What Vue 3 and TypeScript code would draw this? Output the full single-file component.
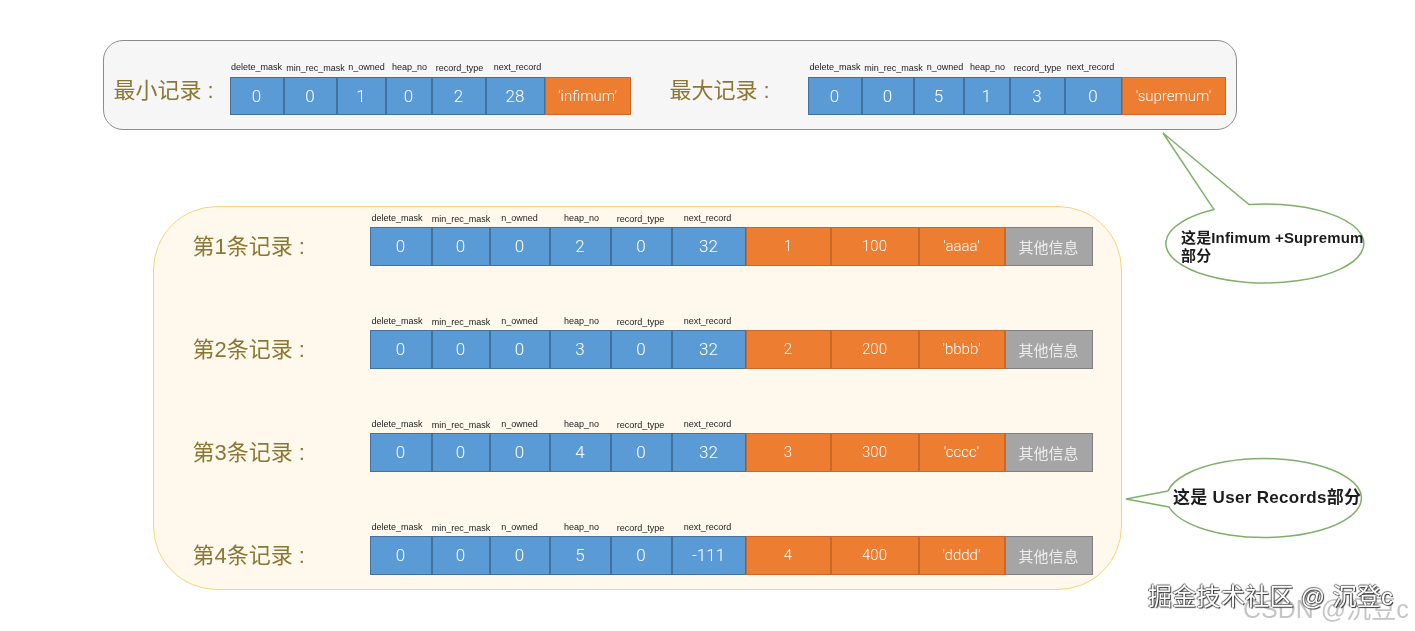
<script setup lang="ts">
interface Cell {
  text: string
  w: number
  kind: 'blue' | 'orange' | 'gray'
}

const fieldNames = ['delete_mask', 'min_rec_mask', 'n_owned', 'heap_no', 'record_type', 'next_record']

const makeCells = (values: string[], widths: number[]): Cell[] =>
  values.map((text, i) => ({
    text,
    w: widths[i],
    kind: i < 6 ? 'blue' : i === values.length - 1 && values.length > 7 ? 'gray' : 'orange'
  }))

// 上面两条：最小记录 / 最大记录
const infimum = makeCells(['0', '0', '1', '0', '2', '28', "'infimum'"], [54, 53, 49, 46, 54, 59, 86])
const supremum = makeCells(['0', '0', '5', '1', '3', '0', "'supremum'"], [54, 52, 50, 46, 55, 57, 104])
const infimumLabels = [54, 64, 38, 48, 52, 64]
const supremumLabels = [55, 62, 41, 44, 56, 50]

const recordWidths = [62, 58, 60, 61, 61, 74, 85, 88, 86, 88]
const recordLabels = [55, 73, 44, 80, 38, 96]
const records = [
  { title: '第1条记录 :', values: ['0', '0', '0', '2', '0', '32', '1', '100', "'aaaa'", '其他信息'] },
  { title: '第2条记录 :', values: ['0', '0', '0', '3', '0', '32', '2', '200', "'bbbb'", '其他信息'] },
  { title: '第3条记录 :', values: ['0', '0', '0', '4', '0', '32', '3', '300', "'cccc'", '其他信息'] },
  { title: '第4条记录 :', values: ['0', '0', '0', '5', '0', '-111', '4', '400', "'dddd'", '其他信息'] }
].map((r) => ({ title: r.title, cells: makeCells(r.values, recordWidths) }))
</script>

<template>
  <div class="page">
    <!-- 顶部：最小记录 + 最大记录 -->
    <section class="sys-panel">
      <div class="sys-item first">
        <span class="sys-title">最小记录 :</span>
        <div class="table">
          <div class="labels">
            <span v-for="(name, i) in fieldNames" :key="name" :style="{ width: infimumLabels[i] + 'px' }">{{ name }}</span>
          </div>
          <div class="cells short">
            <div v-for="(c, i) in infimum" :key="i" class="cell" :class="c.kind" :style="{ width: c.w + 'px' }">{{ c.text }}</div>
          </div>
        </div>
      </div>
      <div class="sys-item second">
        <span class="sys-title">最大记录 :</span>
        <div class="table">
          <div class="labels">
            <span v-for="(name, i) in fieldNames" :key="name" :style="{ width: supremumLabels[i] + 'px' }">{{ name }}</span>
          </div>
          <div class="cells short">
            <div v-for="(c, i) in supremum" :key="i" class="cell" :class="c.kind" :style="{ width: c.w + 'px' }">{{ c.text }}</div>
          </div>
        </div>
      </div>
    </section>

    <!-- 用户记录 -->
    <section class="user-panel">
      <div v-for="r in records" :key="r.title" class="record">
        <span class="record-title">{{ r.title }}</span>
        <div class="table">
          <div class="labels">
            <span v-for="(name, i) in fieldNames" :key="name" :style="{ width: recordLabels[i] + 'px' }">{{ name }}</span>
          </div>
          <div class="cells">
            <div v-for="(c, i) in r.cells" :key="i" class="cell" :class="c.kind" :style="{ width: c.w + 'px' }">{{ c.text }}</div>
          </div>
        </div>
      </div>
    </section>

    <!-- 气泡 -->
    <svg class="bubbles" width="1415" height="631" viewBox="0 0 1415 631">
      <path d="M1214 209.6 L1163 133 L1249 204.5 A99 39.5 0 1 1 1214 209.6 Z" />
      <path d="M1168 491 L1126 499 L1169 507 A97.5 39.5 0 1 0 1168 491 Z" />
    </svg>
    <div class="note note-top">这是Infimum +Supremum<br />部分</div>
    <div class="note note-user">这是 User Records部分</div>

    <!-- 水印 -->
    <div class="mark-csdn">CSDN @沉豆c</div>
    <div class="mark-juejin">掘金技术社区 @ 沉登c</div>
  </div>
</template>

<style scoped>
.page {
  position: relative;
  width: 1415px;
  height: 631px;
  overflow: hidden;
  background: #fff;
  padding-top: 40px;
  box-sizing: border-box;
  font-family: "Liberation Sans", "Noto Sans CJK SC", sans-serif;
  filter: blur(0.35px);
}

.sys-panel {
  display: flex;
  align-items: flex-start;
  box-sizing: border-box;
  margin-left: 103px;
  width: 1134px;
  height: 90px;
  padding-top: 21.5px;
  background: #f6f6f6;
  border: 1.5px solid #8c8c8c;
  border-radius: 20px;
}

.sys-item {
  display: flex;
  align-items: flex-start;
}

.sys-item.first {
  padding-left: 9.5px;
}

.sys-item.second {
  padding-left: 39px;
}

.sys-title {
  margin-top: 14px;
  font-size: 22px;
  line-height: 28px;
  color: #8b7733;
  white-space: nowrap;
}

.first .sys-title {
  width: 116px;
}

.second .sys-title {
  width: 138px;
}

.table {
  display: flex;
  flex-direction: column;
}

.labels {
  display: flex;
  height: 14px;
}

.labels span {
  display: flex;
  justify-content: center;
  font-size: 9px;
  line-height: 10px;
  color: #222;
  white-space: nowrap;
}

.sys-panel .labels span {
  line-height: 8px;
}

/* min_rec_mask 和 record_type 比别的低一点 */
.labels span:nth-child(3n + 2) {
  margin-top: 1px;
}

.cells {
  display: flex;
  height: 39px;
}

.cells.short {
  height: 38px;
}

.cell {
  display: flex;
  align-items: center;
  justify-content: center;
  box-sizing: border-box;
  color: #fff;
  font-family: "Roboto", "Noto Sans CJK SC", sans-serif;
  font-size: 17px;
  font-weight: 300;
  white-space: nowrap;
  border: 1px solid transparent;
}

.blue {
  background: #5b9bd5;
  border-color: #41719c;
}

.orange {
  background: #ed7d31;
  border-color: #c8682a;
  font-size: 15px;
}

.gray {
  background: #a5a5a5;
  border-color: #7f7f7f;
  color: #ececec;
  font-size: 15px;
  font-weight: 400;
}

.user-panel {
  display: flex;
  flex-direction: column;
  gap: 50px;
  box-sizing: border-box;
  margin: 76px 0 0 153px;
  width: 969px;
  height: 384px;
  padding: 5.5px 0 0 38.5px;
  background: #fff8ec;
  border: 1.5px solid #fbd27b;
  border-radius: 64px;
}

.record {
  display: flex;
  align-items: flex-start;
}

.record-title {
  width: 177px;
  margin-top: 20px;
  font-size: 22px;
  line-height: 28px;
  color: #8b7733;
  white-space: nowrap;
}

.bubbles {
  position: absolute;
  left: 0;
  top: 0;
  pointer-events: none;
}

.bubbles path {
  fill: #fff;
  stroke: #7fb069;
  stroke-width: 1.5;
}

.note {
  position: absolute;
  font-weight: bold;
  color: #1c1c1c;
  white-space: nowrap;
}

.note-top {
  left: 1181px;
  top: 229px;
  font-size: 15px;
  line-height: 18px;
  letter-spacing: 0.15px;
}

.note-user {
  left: 1173px;
  top: 488px;
  font-size: 17px;
  line-height: 20px;
  letter-spacing: 0.3px;
}

.mark-csdn {
  position: absolute;
  left: 1243px;
  top: 594px;
  font-size: 25px;
  line-height: 30px;
  color: rgba(150, 150, 150, 0.55);
  white-space: nowrap;
}

.mark-juejin {
  position: absolute;
  left: 1148px;
  top: 582px;
  font-size: 24px;
  line-height: 30px;
  letter-spacing: 0.3px;
  color: #fff;
  white-space: nowrap;
  text-shadow: 1px 1px 1px #333, -1px 0 1px #555, 0 -1px 1px #777;
}
</style>
